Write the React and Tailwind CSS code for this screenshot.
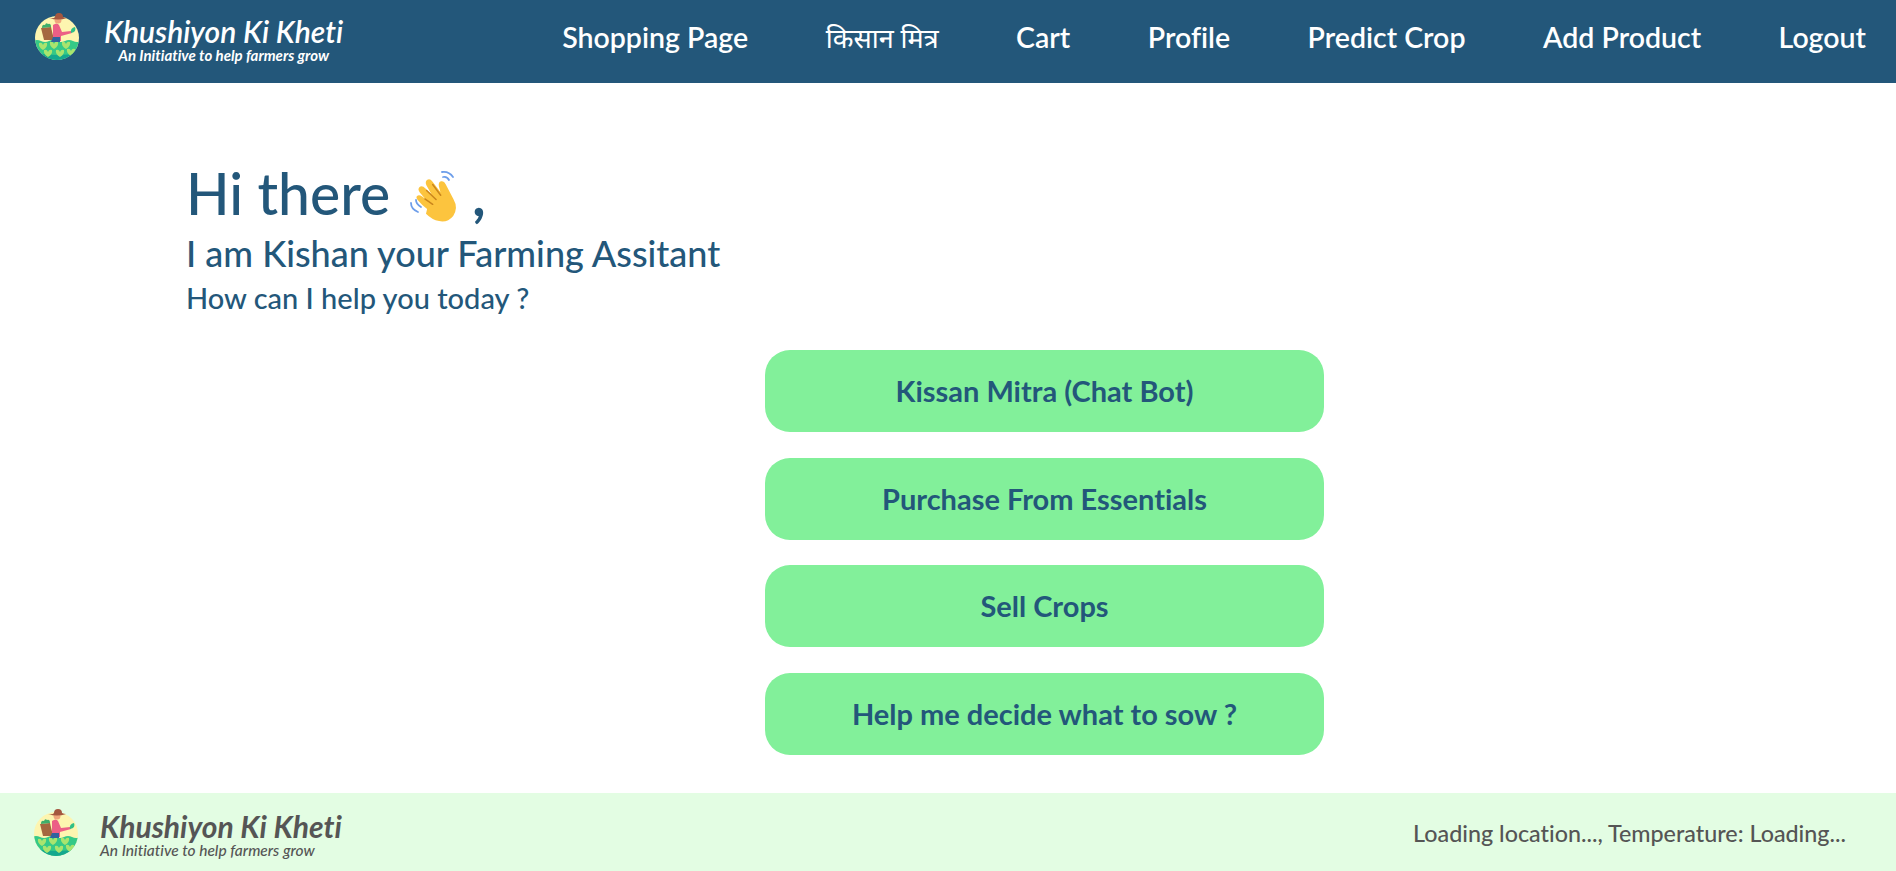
import React from 'react';

const hearts = [[10, 34], [21, 33], [33, 33], [15, 41], [27, 41], [38, 40]];

const Logo = ({ id, className }) => (
    <svg viewBox="0 0 48 48" className={className}>
        <defs>
            <clipPath id={id}><circle cx="24" cy="26" r="22" /></clipPath>
        </defs>
        <circle cx="24" cy="26" r="22" fill="#fdf5b0" />
        <g clipPath={`url(#${id})`}>
            <path d="M0 29q4-2 8 0t8 0 8 0 8 0 8 0 8 0v20H0z" fill="#35c987" />
            <path d="M0 40q24 6 48 0v9H0z" fill="#14a88e" />
            {hearts.map(([x, y]) => (
                <path key={`${x}-${y}`} d={`M${x} ${y + 4}q-5-3-4-7q3-1 4 2q1-3 4-2q1 4-4 7z`} fill="#a9e46e" />
            ))}
        </g>
        <path d="M8 16l10-1 3 13H11z" fill="#a5673f" />
        <path d="M9 16q0-4 3-3 1-3 3-1 3-1 3 3z" fill="#3fae6b" />
        <path d="M20 13q4-3 6 0l3 7 9-1 1 2-11 3 0 5H20z" fill="#ec5f86" />
        <path d="M20 25l7 0 0 5-9 0z" fill="#2f639e" />
        <circle cx="25" cy="8" r="3.500" fill="#f0a57c" />
        <path d="M16 6q5 1 6-1 0-4 4-4t4 4q2 1 4 1-9 3-18 0z" fill="#a4573f" />
        <path d="M38 21q-1-5 4-6 2 5-4 6z" fill="#2fbf86" />
    </svg>
);

const WaveHand = ({ className }) => (
    <svg viewBox="0 0 60 60" className={className}>
        <g transform="rotate(-24 30 34)">
            <path d="M15 36q-3-5-5-12-1-4 2-4t5 6l1 2-3-10q-1-4 2-5t5 4l3 8-1-11q0-4 3-4.500t4 3.500l3 13 1-6q1-4 4-3.500t3 4.500l1 17q1 10-7 15-8 4-15-1-6-4-9-12z" fill="#fcc43e" />
            <path d="M17 26l5 8M22 19l5 12M30 16l3 13" stroke="#c9851c" strokeWidth="1.500" fill="none" strokeLinecap="round" />
        </g>
        <path d="M32 5q7-1 11 5M33 10q4-1 6 3" stroke="#6d9eea" strokeWidth="1.800" fill="none" strokeLinecap="round" />
        <path d="M1 36q0 6 7 9M6 33q0 4 5 7" stroke="#6d9eea" strokeWidth="1.800" fill="none" strokeLinecap="round" />
    </svg>
);

const navLinks = ['Shopping Page', 'किसान मित्र', 'Cart', 'Profile', 'Predict Crop', 'Add Product', 'Logout'];
const actions = ['Kissan Mitra (Chat Bot)', 'Purchase From Essentials', 'Sell Crops', 'Help me decide what to sow ?'];

const App = () => {
    return (
        <div className="flex flex-col min-h-[871px] bg-white font-['Lato','Noto_Sans',sans-serif] [font-variant-ligatures:none]">
            <header className="flex justify-between items-center h-[83px] pl-[33px] pr-[30px] bg-[#23577a] text-white">
                <div className="flex items-center gap-[23px]">
                    <Logo id="headerLogo" className="w-[48px] h-[48px] -mt-[11px]" />
                    <div className="flex flex-col items-center italic -mt-[5px]">
                        <span className="text-[30px] leading-[31px] font-semibold">Khushiyon Ki Kheti</span>
                        <span className="text-[15px] leading-[16px] font-bold">An Initiative to help farmers grow</span>
                    </div>
                </div>
                <nav className="flex items-center gap-[77.5px] text-[28.5px] font-semibold -mt-[9px]">
                    {navLinks.map(link => (
                        <a key={link} className={link === 'किसान मित्र' ? "text-[27px] mt-[3px] font-normal" : ''}>{link}</a>
                    ))}
                </nav>
            </header>

            <main className="flex-1 flex flex-col pt-[76px] pl-[186px] text-[#23577a]">
                <h1 className="flex items-center text-[57px] leading-[54px] font-medium">
                    Hi there
                    <WaveHand className="w-[60px] h-[60px] ml-[20px] mt-[8px]" />
                    <span className="mt-[2px] ml-[2px] font-bold">,</span>
                </h1>
                <h2 className="mt-[5px] text-[36px] leading-[42px] font-medium">I am Kishan your Farming Assitant</h2>
                <h3 className="mt-[6px] text-[29px] leading-[36px] font-medium">How can I help you today ?</h3>
                <div className="flex flex-col gap-[25.6px] w-[559px] ml-[579px] mt-[34px]">
                    {actions.map(action => (
                        <button key={action} className="h-[82px] rounded-[25px] bg-[#82f09a] text-[29px] font-bold text-[#23577a]">
                            {action}
                        </button>
                    ))}
                </div>
            </main>

            <footer className="flex justify-between items-center h-[78px] pl-[32px] pr-[50px] bg-[#e3fde3] text-[#555555]">
                <div className="flex items-center gap-[20px]">
                    <Logo id="footerLogo" className="w-[48px] h-[48px]" />
                    <div className="flex flex-col italic mt-[4px]">
                        <span className="text-[30px] leading-[32px] font-bold">Khushiyon Ki Kheti</span>
                        <span className="text-[15.500px] leading-[16px] font-medium">An Initiative to help farmers grow</span>
                    </div>
                </div>
                <span className="text-[23.300px] font-medium mt-[2px]">Loading location..., Temperature: Loading...</span>
            </footer>
        </div>
    );
};

export default App;
